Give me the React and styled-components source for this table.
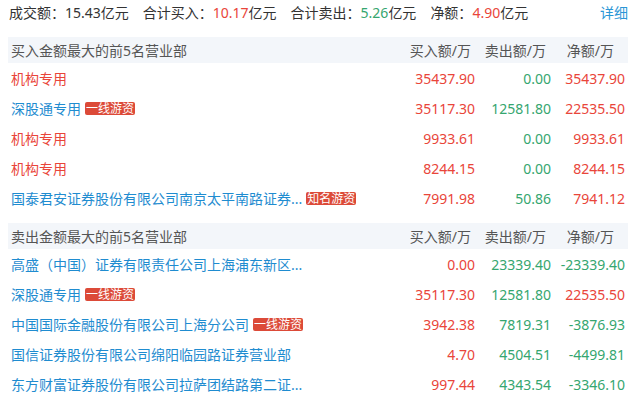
import React from 'react'
import styled, { createGlobalStyle } from 'styled-components'

const GlobalStyle = createGlobalStyle`
  body {
    margin: 0;
    background: #fff;
    font-family: "Noto Sans", "Noto Sans CJK SC", sans-serif;
    font-size: 14px;
    color: #333;
  }
`

const RED = '#e9453a'
const GREEN = '#35a66f'
const BLUE = '#1f8cd0'

const Page = styled.div`
  width: 620px;
  padding: 0 8px;
`

const Summary = styled.div`
  height: 24px;
  display: flex;
  align-items: center;
  padding-left: 1px;
`

const Stat = styled.span`
  margin-right: 14px;
  white-space: nowrap;
`

const Num = styled.span`
  color: ${p => p.color};
`

const More = styled.a`
  margin-left: auto;
  color: #2a96d6;
  text-decoration: none;
`

const Section = styled.section`
  margin-top: ${p => p.gap}px;
`

const Row = styled.div`
  display: grid;
  grid-template-columns: 1fr 76px 76px 74px;
  align-items: center;
  height: ${p => (p.head ? 26 : 30)}px;
  padding: 0 3px;
  background: ${p => (p.head ? '#f3f6fa' : 'transparent')};
  color: ${p => (p.head ? '#555' : '#333')};
`

const NameCell = styled.div`
  display: flex;
  align-items: center;
  min-width: 0;
  white-space: nowrap;
  color: ${p => p.color || 'inherit'};
`

const HeadCell = styled.div`
  text-align: right;
  padding-right: ${p => p.pad || 0}px;
  white-space: nowrap;
`

const Value = styled.div`
  text-align: right;
  white-space: nowrap;
  color: ${p => p.color};
`

const Badge = styled.span`
  display: inline-block;
  margin-left: 4px;
  padding: 0 1px;
  height: 13px;
  line-height: 13px;
  font-size: 12px;
  color: #fff;
  background: #dc4a38;
  border-radius: 2px;
`

const colorOf = v => (parseFloat(v) < 0 ? GREEN : RED)

const buyRows = [
  { name: '机构专用', inst: true, buy: '35437.90', sell: '0.00', net: '35437.90' },
  { name: '深股通专用', tag: '一线游资', buy: '35117.30', sell: '12581.80', net: '22535.50' },
  { name: '机构专用', inst: true, buy: '9933.61', sell: '0.00', net: '9933.61' },
  { name: '机构专用', inst: true, buy: '8244.15', sell: '0.00', net: '8244.15' },
  { name: '国泰君安证券股份有限公司南京太平南路证券...', tag: '知名游资', buy: '7991.98', sell: '50.86', net: '7941.12' }
]

const sellRows = [
  { name: '高盛（中国）证券有限责任公司上海浦东新区...', buy: '0.00', sell: '23339.40', net: '-23339.40' },
  { name: '深股通专用', tag: '一线游资', buy: '35117.30', sell: '12581.80', net: '22535.50' },
  { name: '中国国际金融股份有限公司上海分公司', tag: '一线游资', buy: '3942.38', sell: '7819.31', net: '-3876.93' },
  { name: '国信证券股份有限公司绵阳临园路证券营业部', buy: '4.70', sell: '4504.51', net: '-4499.81' },
  { name: '东方财富证券股份有限公司拉萨团结路第二证...', buy: '997.44', sell: '4343.54', net: '-3346.10' }
]

function Table({ title, rows, gap }) {
  return (
    <Section gap={gap}>
      <Row head>
        <NameCell>{title}</NameCell>
        <HeadCell pad={4}>买入额/万</HeadCell>
        <HeadCell pad={5}>卖出额/万</HeadCell>
        <HeadCell pad={11}>净额/万</HeadCell>
      </Row>
      {rows.map((r, i) => (
        <Row key={i}>
          <NameCell color={r.inst ? RED : BLUE}>
            {r.name}
            {r.tag && <Badge>{r.tag}</Badge>}
          </NameCell>
          <Value color={RED}>{r.buy}</Value>
          <Value color={GREEN}>{r.sell}</Value>
          <Value color={colorOf(r.net)}>{r.net}</Value>
        </Row>
      ))}
    </Section>
  )
}

export default function App() {
  return (
    <Page>
      <GlobalStyle />
      <Summary>
        <Stat>成交额：<Num color="#333">15.43</Num>亿元</Stat>
        <Stat>合计买入：<Num color={RED}>10.17</Num>亿元</Stat>
        <Stat>合计卖出：<Num color={GREEN}>5.26</Num>亿元</Stat>
        <Stat>净额：<Num color={RED}>4.90</Num>亿元</Stat>
        <More href="#">详细</More>
      </Summary>
      <Table title="买入金额最大的前5名营业部" rows={buyRows} gap={13} />
      <Table title="卖出金额最大的前5名营业部" rows={sellRows} gap={10} />
    </Page>
  )
}
